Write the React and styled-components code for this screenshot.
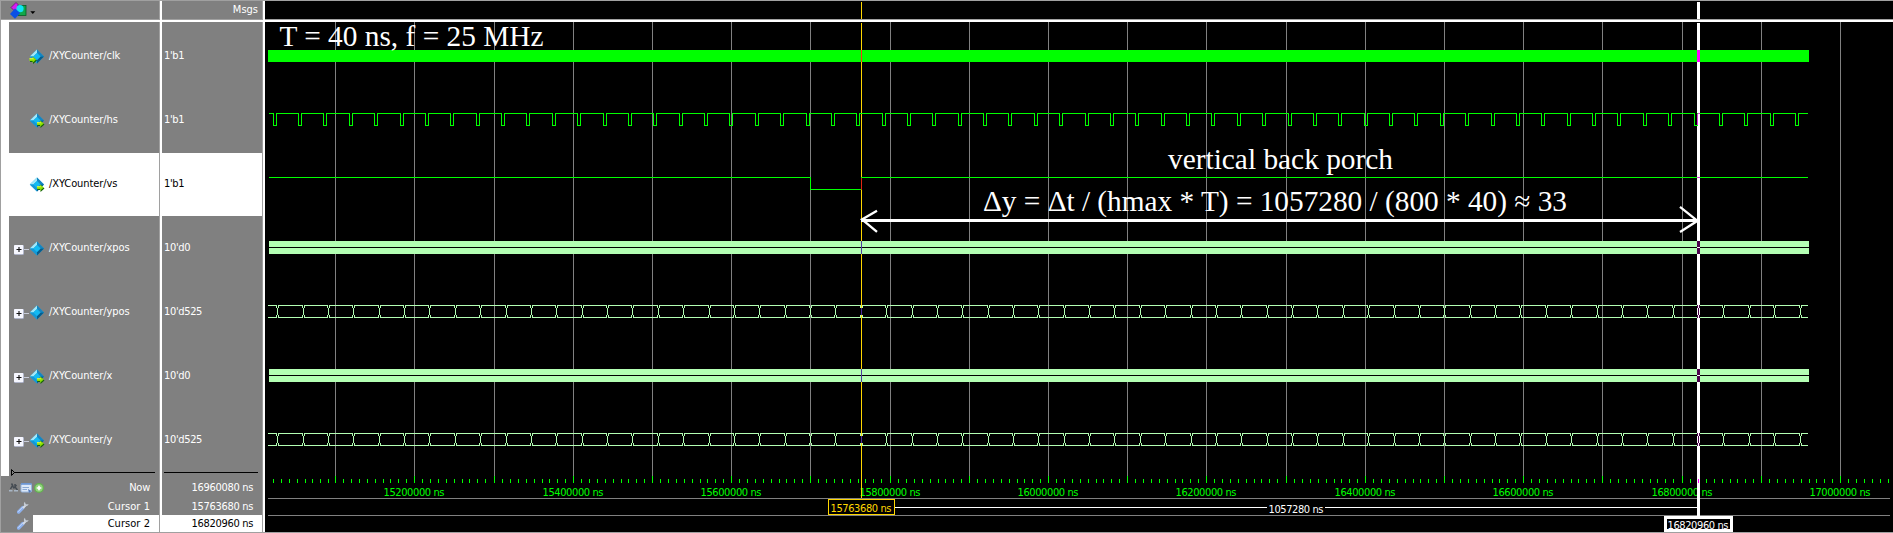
import React from "react";
import styled, { createGlobalStyle } from "styled-components";

const UI_FONT = '"DejaVu Sans Condensed", "DejaVu Sans", sans-serif';

const GlobalStyle = createGlobalStyle`
  body { margin: 0; background: #000; overflow: hidden; }
`;

const Window = styled.div`
  box-sizing: border-box;
  width: 1893px;
  height: 533px;
  display: flex;
  background: #000;
  border: solid #a0a0a0;
  border-width: 1px 0 1px 1px;
  font: 11px/14px ${UI_FONT};
  font-stretch: condensed;
`;

const Pane = styled.section`
  box-sizing: border-box;
  width: ${(p) => p.$width}px;
  display: flex;
  flex-direction: column;
  background: #808080;
  border-right: 2px solid #fff;
  box-shadow: inset -1px 0 #a0a0a0;
`;

const PaneHeader = styled.header`
  box-sizing: border-box;
  height: 21px;
  flex: none;
  display: flex;
  align-items: center;
  justify-content: ${(p) => (p.$end ? "flex-end" : "flex-start")};
  padding: ${(p) => (p.$end ? "0 5px 1px 0" : "0 0 0 8px")};
  color: #fff;
  border-bottom: 2px solid #fff;
  box-shadow: inset 0 -1px #a0a0a0;
`;

const SignalList = styled.div`
  box-sizing: border-box;
  height: 454px;
  flex: none;
  padding-top: 3px;
  border-left: ${(p) => (p.$gutter ? "8px solid #fff" : "0")};
`;

const SignalRow = styled.div`
  box-sizing: border-box;
  height: 64px;
  padding: 0 0 1px ${(p) => (p.$value ? 2 : 5)}px;
  margin-right: 1px;
  display: flex;
  align-items: center;
  color: ${(p) => (p.$selected ? "#000" : "#fff")};
  background: ${(p) => (p.$selected ? "linear-gradient(#fff 63px, #808080 63px)" : "transparent")};
`;

const Label = styled.span`
  display: inline-block;
  white-space: pre;
  letter-spacing: ${(p) => p.$spacing ?? -0.25}px;
`;

const SignalLabel = styled(Label)`
  padding-bottom: 2px;
`;

const Expander = styled.span`
  width: 15px;
  height: 16px;
  flex: none;
  display: block;
`;

const IconSlot = styled.span`
  width: 20px;
  height: 16px;
  flex: none;
`;

const EndMarker = styled.svg`
  display: block;
  width: ${(p) => p.$width}px;
  height: 7px;
  margin-left: 2px;
`;

const MarkerStrip = styled.div`
  height: 7px;
  margin-top: -7px;
  padding-left: ${(p) => p.$indent}px;
`;

const FooterRow = styled.div`
  height: ${(p) => p.$height}px;
  flex: none;
  display: flex;
  align-items: center;
  margin-right: 1px;
  color: #fff;
`;

const ToolCell = styled.span`
  width: 32px;
  height: 100%;
  display: flex;
  align-items: center;
  justify-content: flex-end;
  flex: none;
`;

const ToolStrip = styled.span`
  height: 12px;
  margin-right: -12px;
  line-height: 0;
`;

const WrenchSlot = styled.span`
  margin-right: 4px;
  line-height: 0;
`;

const ReadOut = styled.span`
  flex: 1;
  align-self: stretch;
  display: flex;
  align-items: center;
  justify-content: flex-end;
  padding-right: 9px;
  color: ${(p) => (p.$selected ? "#000" : "#fff")};
  background: ${(p) => (p.$selected ? "#fff" : "transparent")};
`;

const WavePane = styled.section`
  flex: 1;
  display: flex;
  flex-direction: column;
`;

const WaveHeader = styled.header`
  height: 18px;
  border-bottom: 2px solid #fff;
  box-shadow: inset 0 -1px #a0a0a0;
  padding-bottom: 1px;
`;

const Drawing = styled.svg`
  display: block;
  overflow: visible;
`;

const SIGNALS = [
  { name: "/XYCounter/clk", value: "1'b1", port: "in" },
  { name: "/XYCounter/hs", value: "1'b1", port: "out" },
  { name: "/XYCounter/vs", value: "1'b1", port: "out", selected: true },
  { name: "/XYCounter/xpos", value: "10'd0", bus: true },
  { name: "/XYCounter/ypos", value: "10'd525", bus: true },
  { name: "/XYCounter/x", value: "10'd0", port: "out", bus: true },
  { name: "/XYCounter/y", value: "10'd525", port: "out", bus: true },
];

function SignalIcon({ port }) {
  return (
    <svg width="16" height="16" viewBox="0 0 16 16">
      <path d="M8 .5 15 7.5 8 14.5 .8 7.5Z" fill="#0ba7e3" />
      <path d="M8 .5V4L4.3 7.5H.8Z" fill="#a4e7f8" />
      <path d="M8 .5 15 7.5H11.5L8 4Z" fill="#1784c0" />
      <path d="M.8 7.5H4.3L8 11V14.5Z" fill="#1598d6" />
      <path d="M15 7.5 8 14.5V11L11.5 7.5Z" fill="#075c8c" />
      <path d="M8 4 11.5 7.5 8 11 4.3 7.5Z" fill="#14baf2" />
      {port && (
        <g transform={port === "in" ? "translate(0 0)" : "translate(7.5 0)"}>
          <path d="M1 10.3H4V8.2L8 11.6 4 15V13H1Z" fill="#17630b" />
          <path d="M.5 9.3H3.6V7.4L7.2 10.6 3.6 13.8V12H.5Z" fill="#8be000" />
          <path d="M.5 9.3H4L5.2 10.3H.5Z" fill="#e8f65a" />
        </g>
      )}
    </svg>
  );
}

function PlusBox() {
  return (
    <svg width="15" height="16" viewBox="0 0 15 16">
      <path d="M10 8.5H15" stroke="#c8ccda" />
      <rect x="0" y="4" width="10" height="10" rx="1" fill="#9aa0b8" />
      <rect x="0" y="4" width="9.3" height="9.3" rx="1" fill="#f6f7ff" />
      <path d="M2.500 8.500H7.500M5 6V11" stroke="#111" strokeWidth="1.1" />
    </svg>
  );
}

function ObjectsIcon() {
  return (
    <svg width="27" height="17" viewBox="0 0 27 17">
      <path d="M2 5.500 7 .5 11.500 5 6 9.500Z" fill="#d51bf0" stroke="#5c0868" strokeWidth=".7" />
      <rect x="9" y="3.500" width="8" height="10" fill="#12a84a" stroke="#075c24" strokeWidth=".8" />
      <circle cx="11" cy="6.700" r="3.600" fill="#10e3f4" />
      <path d="M1 12 6 6.500 11.300 11 6 16.700Z" fill="#0b50e4" />
      <path d="M21.300 9.300H26.300L23.800 12Z" fill="#000" />
    </svg>
  );
}

function NowTools() {
  return (
    <svg width="36" height="12" viewBox="0 0 36 12">
      <path d="M2.500 1.500 4 4M1.500 7 3.500 3.500 5 6.500M6 2V5L8.500 8M5 6 7.500 3" stroke="#454b52" strokeWidth="1.500" fill="none" />
      <path d="M0 8.700H3.500M5 8.700H9" stroke="#a8b5c4" strokeWidth="1.400" />
      <rect x="12" y="1.500" width="10.500" height="8.500" rx="1" fill="#dce8f8" stroke="#98b6df" />
      <path d="M12 2H22.500" stroke="#5a89cd" strokeWidth="1.400" />
      <path d="M13.500 5.500H20M13.500 7.500H18" stroke="#8aa9d4" />
      <path d="M19 7 22.500 9 20 11Z" fill="#547bbb" />
      <circle cx="30" cy="6" r="5" fill="#64b150" />
      <circle cx="30" cy="6" r="3.700" fill="#92d37e" />
      <path d="M30 3.700V8.300M27.700 6H32.300" stroke="#fff" strokeWidth="1.700" />
    </svg>
  );
}

function Wrench() {
  return (
    <svg width="12" height="13" viewBox="0 0 12 13">
      <path d="M1.600 11 6 6.500" stroke="#8fb2ee" strokeWidth="3.400" strokeLinecap="round" />
      <path d="M1.500 10.500 5.500 6.300" stroke="#c0d6fb" strokeWidth="1" strokeLinecap="round" />
      <path d="M6 7 8.500 4.500" stroke="#d6dbe2" strokeWidth="1.800" />
      <path d="M8 .8C6.300 2 6.600 5 8.800 5.200 10.300 5.300 11.400 4.300 11.500 3L9.800 3.600 8.300 2.500Z" fill="#c5ccd5" />
    </svg>
  );
}

const GREEN = "#00ff00";
const BUS = "#b3ffb3";
const CURSOR = "#ffd700";
const GRID = Array.from({ length: 20 }, (_, k) => Math.round(335.1 + 79.21 * k));
const PULSES = Array.from({ length: 61 }, (_, k) => Math.round(272.7 + 25.372 * k));
const CROSSINGS = Array.from({ length: 61 }, (_, k) => Math.round(277.2 + 25.372 * k));
const TICK_STEPS = [8, 16, 24, 32, 40, 48, 55, 63, 71];

const MINOR_TICKS = [257, ...GRID]
  .flatMap((x) => TICK_STEPS.map((s) => x + s))
  .filter((x) => x > 270 && x < 1890);

const HS_PATH =
  "M269 113.500" + PULSES.map((x) => `H${x + 0.5}V125.500H${x + 3.5}V113.500`).join("") + "H1808";

function busPath(y) {
  let d = "";
  let from = 268;
  CROSSINGS.forEach((x) => {
    d += `M${from} ${y + 0.5}H${x - 0.5}V${y + 3}M${from} ${y + 12.5}H${x - 0.5}V${y + 10}`;
    d += `M${x + 0.5} ${y + 3}V${y + 10}`;
    d += `M${x + 1.5} ${y}V${y + 3}M${x + 1.5} ${y + 10}V${y + 13}`;
    from = x + 1;
  });
  return d + `M${from} ${y + 0.5}H1808M${from} ${y + 12.5}H1808`;
}

const ScaleText = styled.text`
  font: 11px ${UI_FONT};
  font-stretch: condensed;
`;

const NoteText = styled.text`
  font: 29.33px "Liberation Serif", serif;
  fill: #fff;
`;

function UiText({ x, y, width, fill, children }) {
  return (
    <ScaleText x={x} y={y} fill={fill} textLength={width}>
      {children}
    </ScaleText>
  );
}

function WaveForms() {
  return (
    <Drawing width="1628" height="510" viewBox="265 22 1628 510" shapeRendering="crispEdges">
      {GRID.map((x, k) => (
        <g key={x}>
          <rect x={x} y="22" width="1" height="454" fill="#808080" />
          <rect x={x} y="476" width="1" height="7" fill={GREEN} />
          {k % 2 === 1 && (
            <UiText x={x - 30.5} y="496" width="61" fill={GREEN}>
              {`${15100000 + k * 100000} ns`}
            </UiText>
          )}
        </g>
      ))}
      {MINOR_TICKS.map((x) => (
        <rect key={x} x={x} y="479" width="1" height="4" fill={GREEN} />
      ))}
      <path d="M268 498.500H1890M268 515.500H1890" stroke="#808080" />

      <rect x="861" y="23" width="1" height="475" fill={CURSOR} />
      <rect x="1697" y="23" width="3" height="493" fill="#fff" />

      <rect x="268" y="50" width="1541" height="12" fill={GREEN} />
      <path d={HS_PATH} fill="none" stroke={GREEN} />
      <path d="M269 177.500H810.500V189.500H861M861 177.500H1808" fill="none" stroke={GREEN} />
      {[241, 369].map((y) => (
        <g key={y}>
          <rect x="269" y={y} width="1540" height="13" fill={BUS} />
          <rect x="269" y={y + 6} width="1540" height="1" fill="#000" />
          <rect x="861" y={y} width="1" height="13" fill="#4c3ca0" />
          <path d={`M1697 ${y + 3}h3M1697 ${y + 10}h3`} stroke="#4c004c" strokeWidth="6" />
          <rect x="1697" y={y + 6} width="3" height="1" fill="#fff" />
        </g>
      ))}
      {[305, 433].map((y) => (
        <g key={y}>
          <path d={busPath(y)} fill="none" stroke={BUS} />
          <rect x="861" y={y + 1} width="1" height="2" fill={CURSOR} />
          <rect x="861" y={y + 3} width="1" height="7" fill="#4c2ca0" />
          <rect x="1697" y={y} width="3" height="13" fill="#4c004c" />
          <path d={`M1697.500 ${y + 3}v7M1699.500 ${y + 3}v7M1698.500 ${y}v3M1698.500 ${y + 10}v3`} stroke="#fff" />
        </g>
      ))}
      <rect x="861" y="50" width="1" height="12" fill="#ff3020" />
      <rect x="861" y="178" width="1" height="12" fill="#e02810" />
      <rect x="1697" y="50" width="3" height="12" fill="#ff00ff" />
      <path d="M1697.500 125V114M1698 113.500H1700M1697 177.500H1700" stroke="#e030e0" />
      <rect x="1698" y="479" width="1" height="4" fill="#ff00ff" />

      <path d="M861 220.500H1698" stroke="#fff" strokeWidth="3" />
      <path d="M877 210.800 862 219.500 877 231.800M1680 206.800 1697.500 220.800 1680 232" fill="none" stroke="#fff" strokeWidth="2.300" shapeRendering="geometricPrecision" />

      <NoteText x="279.500" y="46" textLength="264">T = 40 ns, f = 25 MHz</NoteText>
      <NoteText x="1168" y="169" textLength="225">vertical back porch</NoteText>
      <NoteText x="983" y="211" textLength="584">Δy = Δt / (hmax * T) = 1057280 / (800 * 40) ≈ 33</NoteText>

      <path d="M895 507.500H1267M1325 507.500H1698" stroke="#fff" />
      <UiText x="1268.500" y="513" width="55" fill="#fff">1057280 ns</UiText>
      <rect x="828.500" y="499.500" width="66" height="15" fill="#000" stroke={CURSOR} />
      <UiText x="830.500" y="512" width="61" fill={CURSOR}>15763680 ns</UiText>
      <rect x="1665.500" y="517.500" width="66" height="13" fill="#000" stroke="#fff" strokeWidth="3" />
      <UiText x="1667.500" y="529" width="61" fill="#fff">16820960 ns</UiText>
    </Drawing>
  );
}

function NameFooter() {
  return (
    <>
      <MarkerStrip $indent={8}>
        <EndMarker $width={146} viewBox="0 0 146 7">
          <path d="M3 3.500H144" stroke="#000" />
          <path d="M.5 .5V6.500L3.500 3.500Z" fill="none" stroke="#000" />
        </EndMarker>
      </MarkerStrip>
      <FooterRow $height={23}>
        <ToolCell><ToolStrip><NowTools /></ToolStrip></ToolCell>
        <ReadOut><Label>Now</Label></ReadOut>
      </FooterRow>
      <FooterRow $height={16}>
        <ToolCell><WrenchSlot><Wrench /></WrenchSlot></ToolCell>
        <ReadOut><Label $spacing={0.05}>Cursor 1</Label></ReadOut>
      </FooterRow>
      <FooterRow $height={17}>
        <ToolCell><WrenchSlot><Wrench /></WrenchSlot></ToolCell>
        <ReadOut $selected><Label $spacing={0.05}>Cursor 2</Label></ReadOut>
      </FooterRow>
    </>
  );
}

function ValueFooter() {
  return (
    <>
      <MarkerStrip $indent={0}>
        <EndMarker $width={96} viewBox="0 0 96 7">
          <path d="M0 3.500H94" stroke="#000" />
        </EndMarker>
      </MarkerStrip>
      <FooterRow $height={23}><ReadOut><Label $spacing={-0.32}>16960080 ns</Label></ReadOut></FooterRow>
      <FooterRow $height={16}><ReadOut><Label $spacing={-0.32}>15763680 ns</Label></ReadOut></FooterRow>
      <FooterRow $height={17}><ReadOut $selected><Label $spacing={-0.32}>16820960 ns</Label></ReadOut></FooterRow>
    </>
  );
}

export default function App() {
  return (
    <>
      <GlobalStyle />
      <Window>
        <Pane $width={161}>
          <PaneHeader><ObjectsIcon /></PaneHeader>
          <SignalList $gutter>
            {SIGNALS.map((s) => (
              <SignalRow key={s.name} $selected={s.selected}>
                <Expander>{s.bus && <PlusBox />}</Expander>
                <IconSlot><SignalIcon port={s.port} /></IconSlot>
                <SignalLabel $spacing={-0.08}>{s.name}</SignalLabel>
              </SignalRow>
            ))}
          </SignalList>
          <NameFooter />
        </Pane>
        <Pane $width={103}>
          <PaneHeader $end><Label $spacing={0}>Msgs</Label></PaneHeader>
          <SignalList>
            {SIGNALS.map((s) => (
              <SignalRow key={s.name} $selected={s.selected} $value>
                <SignalLabel $spacing={-0.35}>{s.value}</SignalLabel>
              </SignalRow>
            ))}
          </SignalList>
          <ValueFooter />
        </Pane>
        <WavePane>
          <WaveHeader>
            <Drawing width="1628" height="18" viewBox="265 1 1628 18" shapeRendering="crispEdges">
              <rect x="861" y="2" width="1" height="17" fill={CURSOR} />
              <rect x="1697" y="2" width="3" height="17" fill="#fff" />
            </Drawing>
          </WaveHeader>
          <WaveForms />
        </WavePane>
      </Window>
    </>
  );
}
